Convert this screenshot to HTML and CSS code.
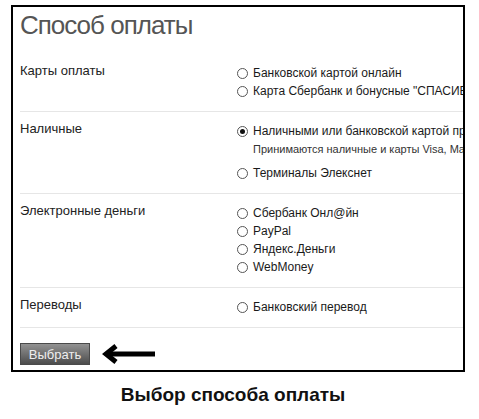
FILE: index.html
```html
<!DOCTYPE html>
<html lang="ru">
<head>
  <meta charset="UTF-8" />
  <meta name="viewport" content="width=device-width, initial-scale=1.0"/>
  <title>Способ оплаты</title>
  <link rel="stylesheet" href="styles.css">
</head>
<body>
  <div class="frame">
    <h1 class="title">Способ оплаты</h1>

    <div class="group">
      <div class="groupName">Карты оплаты</div>
      <div class="options">
        <label class="option"><span class="radio"></span>Банковской картой онлайн</label>
        <label class="option"><span class="radio"></span>Карта Сбербанк и бонусные "СПАСИБО от Сбербанка"</label>
      </div>
    </div>

    <div class="group">
      <div class="groupName">Наличные</div>
      <div class="options">
        <label class="option"><span class="radio checked"></span>Наличными или банковской картой при получении</label>
        <div class="optionNote">Принимаются наличные и карты Visa, MasterCard</div>
        <label class="option"><span class="radio"></span>Терминалы Элекснет</label>
      </div>
    </div>

    <div class="group">
      <div class="groupName">Электронные деньги</div>
      <div class="options">
        <label class="option"><span class="radio"></span>Сбербанк Онл@йн</label>
        <label class="option"><span class="radio"></span>PayPal</label>
        <label class="option"><span class="radio"></span>Яндекс.Деньги</label>
        <label class="option"><span class="radio"></span>WebMoney</label>
      </div>
    </div>

    <div class="group">
      <div class="groupName">Переводы</div>
      <div class="options">
        <label class="option"><span class="radio"></span>Банковский перевод</label>
      </div>
    </div>

    <div class="actions">
      <button class="selectBtn">Выбрать</button>
      <svg class="arrow" width="54" height="22" viewBox="0 0 54 22">
        <line x1="5" y1="11" x2="53" y2="11" stroke="#000" stroke-width="5"/>
        <polyline points="14,3 4,11 14,19" fill="none" stroke="#000" stroke-width="5"/>
      </svg>
    </div>
  </div>

  <p class="caption">Выбор способа оплаты</p>
</body>
</html>
```

FILE: styles.css
```css
body {
  margin: 0;
  font-family: 'Liberation Sans', Arial, sans-serif;
  background: #fff;
  color: #222;
}

.frame {
  box-sizing: border-box;
  width: 454px;
  margin: 5px 0 0 11px;
  border: 2px solid #000;
  padding: 0 0 5px 7px;
  overflow: hidden;
}

.title {
  margin: 1px 0 12px;
  font-size: 26px;
  line-height: 34px;
  letter-spacing: -1px;
  font-weight: normal;
  color: #555;
}

.group {
  display: grid;
  grid-template-columns: 217px 1fr;
  padding: 8px 0 11px;
  border-bottom: 1px solid #e6e6e6;
  font-size: 13px;
  line-height: 18px;
}

.groupName {
  color: #222;
}

.options {
  margin-top: 2px;
  white-space: nowrap;
  overflow: hidden;
  font-size: 12px;
}

.option {
  display: flex;
  align-items: center;
  height: 18px;
  color: #1a1a1a;
}

.optionNote {
  padding-left: 16px;
  font-size: 11px;
  color: #333;
  margin-bottom: 6px;
}

.radio {
  box-sizing: border-box;
  width: 11px;
  height: 11px;
  margin-right: 5px;
  border: 1px solid #555;
  border-radius: 50%;
  flex-shrink: 0;
  display: flex;
  align-items: center;
  justify-content: center;
}

.radio.checked::after {
  content: '';
  width: 5px;
  height: 5px;
  border-radius: 50%;
  background: #111;
}

.actions {
  display: flex;
  align-items: center;
  gap: 12px;
  margin-top: 15px;
}

.selectBtn {
  width: 70px;
  height: 22px;
  padding: 0;
  border: 1px solid #4a4a4a;
  background: linear-gradient(#929292, #4c4c4c);
  color: #eee;
  font-family: 'Liberation Sans', Arial, sans-serif;
  font-size: 13px;
}

.arrow {
  display: block;
}

.caption {
  width: 454px;
  margin: 12px 0 0 11px;
  padding-right: 10px;
  box-sizing: border-box;
  text-align: center;
  font-size: 19px;
  line-height: 22px;
  font-weight: bold;
  color: #111;
}
```
